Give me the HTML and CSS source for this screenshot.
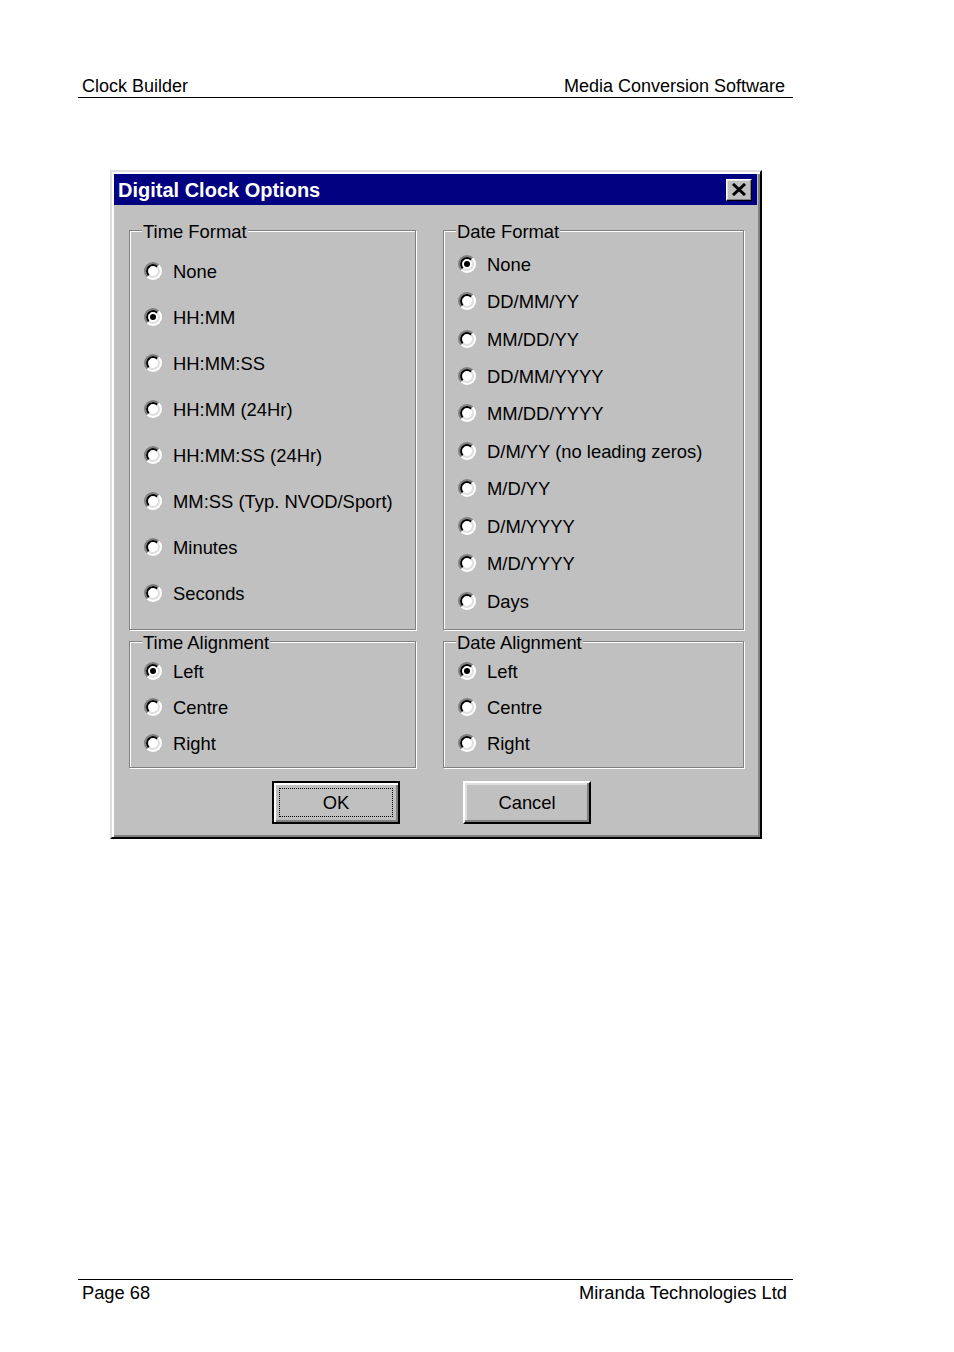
FILE: index.html
```html
<!DOCTYPE html>
<html>
<head>
<meta charset="utf-8">
<link rel="stylesheet" href="styles.css">
</head>
<body>
<div class="page">
  <div class="doc-header">
    <span>Clock Builder</span>
    <span>Media Conversion Software</span>
  </div>

  <div class="dialog">
    <div class="titlebar">
      <span class="title">Digital Clock Options</span>
      <div class="close-btn">
        <svg width="16" height="13" viewBox="0 0 16 13"><path d="M2 1 L14 12 M14 1 L2 12" stroke="#000" stroke-width="3" fill="none"/></svg>
      </div>
    </div>

    <div class="groups">
      <div class="group group-tall group-time">
        <span class="group-label">Time Format</span>
        <div class="row"><span class="radio"></span><span>None</span></div>
        <div class="row"><span class="radio checked"></span><span>HH:MM</span></div>
        <div class="row"><span class="radio"></span><span>HH:MM:SS</span></div>
        <div class="row"><span class="radio"></span><span>HH:MM (24Hr)</span></div>
        <div class="row"><span class="radio"></span><span>HH:MM:SS (24Hr)</span></div>
        <div class="row"><span class="radio"></span><span>MM:SS (Typ. NVOD/Sport)</span></div>
        <div class="row"><span class="radio"></span><span>Minutes</span></div>
        <div class="row"><span class="radio"></span><span>Seconds</span></div>
      </div>
      <div class="group group-tall group-date">
        <span class="group-label">Date Format</span>
        <div class="row"><span class="radio checked"></span><span>None</span></div>
        <div class="row"><span class="radio"></span><span>DD/MM/YY</span></div>
        <div class="row"><span class="radio"></span><span>MM/DD/YY</span></div>
        <div class="row"><span class="radio"></span><span>DD/MM/YYYY</span></div>
        <div class="row"><span class="radio"></span><span>MM/DD/YYYY</span></div>
        <div class="row"><span class="radio"></span><span>D/M/YY (no leading zeros)</span></div>
        <div class="row"><span class="radio"></span><span>M/D/YY</span></div>
        <div class="row"><span class="radio"></span><span>D/M/YYYY</span></div>
        <div class="row"><span class="radio"></span><span>M/D/YYYY</span></div>
        <div class="row"><span class="radio"></span><span>Days</span></div>
      </div>
      <div class="group group-short group-align">
        <span class="group-label">Time Alignment</span>
        <div class="row"><span class="radio checked"></span><span>Left</span></div>
        <div class="row"><span class="radio"></span><span>Centre</span></div>
        <div class="row"><span class="radio"></span><span>Right</span></div>
      </div>
      <div class="group group-short group-align">
        <span class="group-label">Date Alignment</span>
        <div class="row"><span class="radio checked"></span><span>Left</span></div>
        <div class="row"><span class="radio"></span><span>Centre</span></div>
        <div class="row"><span class="radio"></span><span>Right</span></div>
      </div>
    </div>

    <div class="buttons">
      <div class="btn btn-default"><span>OK</span></div>
      <div class="btn"><span>Cancel</span></div>
    </div>
  </div>

  <div class="doc-footer">
    <span>Page 68</span>
    <span>Miranda Technologies Ltd</span>
  </div>
</div>
</body>
</html>
```

FILE: styles.css
```css
* { box-sizing: border-box; }

html, body {
  margin: 0;
  padding: 0;
  background: #fff;
}

body {
  font-family: "Liberation Sans", Arial, sans-serif;
  color: #000;
}

.page {
  padding-top: 76px;
}

.doc-header,
.doc-footer {
  margin-left: 78px;
  width: 715px;
  display: flex;
  justify-content: space-between;
  font-size: 18px;
  line-height: 21px;
  padding-left: 4px;
  padding-right: 8px;
}

.doc-header {
  height: 22px;
  border-bottom: 1px solid #000;
}

.doc-footer {
  margin-top: 440px;
  border-top: 1px solid #000;
  padding-top: 2px;
  padding-right: 6px;
  font-size: 18.3px;
}

/* Dialog */
.dialog {
  margin-top: 72px;
  margin-left: 110px;
  width: 652px;
  height: 669px;
  background: #c0c0c0;
  border: 2px solid;
  border-color: #dfdfdf #000 #000 #dfdfdf;
  box-shadow: inset 2px 2px 0 #fff, inset -2px -2px 0 #808080;
  padding: 2px 3px 2px 2px;
  font-size: 18.4px;
}

.titlebar {
  height: 31px;
  background: #000080;
  display: flex;
  align-items: center;
  justify-content: space-between;
  padding-left: 4px;
  padding-right: 5px;
}

.title {
  color: #fff;
  font-weight: bold;
  font-size: 20px;
  line-height: 24px;
}

.close-btn {
  width: 26px;
  height: 22px;
  background: #c0c0c0;
  border: 1px solid;
  border-color: #fff #000 #000 #fff;
  box-shadow: inset -1px -1px 0 #808080, inset 1px 1px 0 #dfdfdf;
  display: flex;
  align-items: center;
  justify-content: center;
}

.close-btn svg { display: block; }

.groups {
  margin-top: 25px;
  margin-left: 15px;
  display: grid;
  grid-template-columns: 287px 301px;
  grid-template-rows: 400px 127px;
  column-gap: 27px;
  row-gap: 11px;
}

.group {
  position: relative;
  border: 1px solid #808080;
  box-shadow: 1px 1px 0 #fff, inset 1px 1px 0 #fff;
  padding-left: 14px;
}

.group-label {
  position: absolute;
  top: -10px;
  left: 12px;
  background: #c0c0c0;
  padding: 0 1px;
  line-height: 22px;
  white-space: nowrap;
}

.row {
  display: flex;
  align-items: center;
  gap: 11px;
  white-space: nowrap;
  line-height: 22px;
}

.row > span:last-child {
  position: relative;
  top: 1px;
}

.group-time { padding-top: 17px; }
.group-time .row { height: 46px; }

.group-date { padding-top: 14px; }
.group-date .row { height: 37.45px; }

.group-align { padding-top: 11px; }
.group-align .row { height: 36px; }

/* Win95 radio */
.radio {
  position: relative;
  flex: none;
  width: 18px;
  height: 18px;
  border-radius: 50%;
  border: 2px solid;
  border-color: #808080 #fff #fff #808080;
  background: #fff;
}

.radio::before {
  content: "";
  position: absolute;
  inset: 0;
  border-radius: 50%;
  border: 2px solid;
  border-color: #000 #dfdfdf #dfdfdf #000;
}

.radio.checked::after {
  content: "";
  position: absolute;
  left: 4px;
  top: 4px;
  width: 6px;
  height: 6px;
  border-radius: 50%;
  background: #000;
}

/* Buttons */
.buttons {
  margin-top: 13px;
  margin-left: 158px;
  display: flex;
  gap: 63px;
}

.btn {
  position: relative;
  width: 128px;
  height: 43px;
  display: flex;
  align-items: center;
  justify-content: center;
  background: #c0c0c0;
  border: 2px solid;
  border-color: #fff #000 #000 #fff;
  box-shadow: inset -2px -2px 0 #808080, inset 2px 2px 0 #dfdfdf;
  line-height: 22px;
}

.btn-default {
  border: 2px solid #000;
  box-shadow: inset 2px 2px 0 #fff, inset -2px -2px 0 #808080;
}

.btn-default::after {
  content: "";
  position: absolute;
  left: 5px;
  top: 5px;
  right: 5px;
  bottom: 5px;
  border: 1px dotted #000;
}
```
